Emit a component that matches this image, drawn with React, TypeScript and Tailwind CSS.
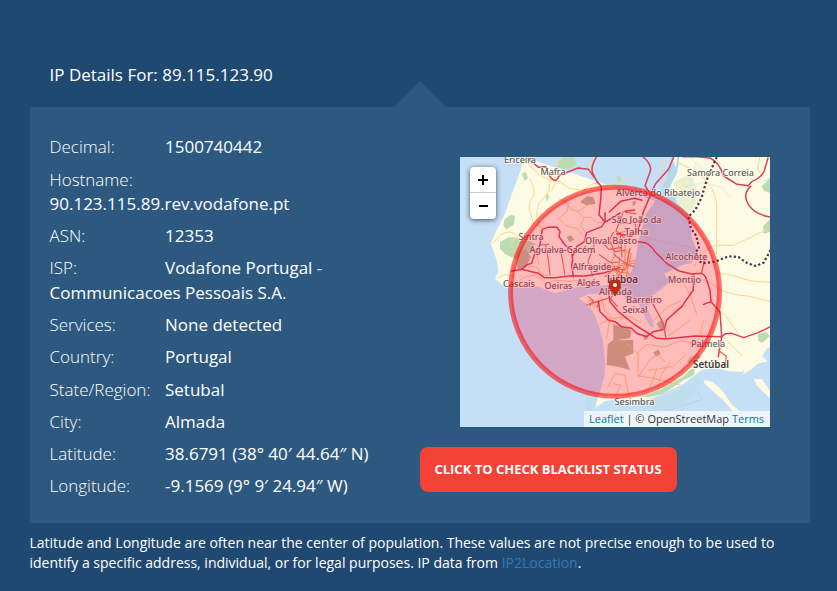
import React from "react";

const details: [string, string][] = [
  ["Decimal:", "1500740442"],
  ["Hostname:", "90.123.115.89.rev.vodafone.pt"],
  ["ASN:", "12353"],
  ["ISP:", "Vodafone Portugal - Communicacoes Pessoais S.A."],
  ["Services:", "None detected"],
  ["Country:", "Portugal"],
  ["State/Region:", "Setubal"],
  ["City:", "Almada"],
  ["Latitude:", "38.6791 (38° 40′ 44.64″ N)"],
  ["Longitude:", "-9.1569 (9° 9′ 24.94″ W)"],
];

// name, centre x, baseline y, size, bold, text length
const places: [string, number, number, number, boolean, number][] = [
  ["Ericeira", 60, 5.5, 9, false, 32],
  ["Mafra", 93, 18, 9, false, 25],
  ["Sintra", 71, 83, 9, false, 25],
  ["Agualva-Cacém", 102.5, 96, 9, false, 66],
  ["Olival Basto", 151, 86.5, 9, false, 52],
  ["Alfragide", 132, 112.5, 9, false, 39],
  ["Cascais", 59, 130, 9, false, 32],
  ["Oeiras", 98.5, 132, 9, false, 28],
  ["Algés", 128.5, 128.5, 9, false, 23],
  ["São João da", 176.5, 66, 9, false, 50],
  ["Talha", 176.5, 78, 9, false, 24],
  ["Alverca do Ribatejo", 198, 39, 9, false, 84],
  ["Samora Correia", 260.5, 19, 9, false, 67],
  ["Alcochete", 226.5, 102.5, 9, false, 42],
  ["Montijo", 224.5, 126, 9, false, 33],
  ["Lisboa", 162.5, 125.5, 10.5, true, 31],
  ["Almada", 155.5, 138, 9, false, 33],
  ["Barreiro", 184, 145.5, 9, false, 36],
  ["Seixal", 175, 156, 9, false, 25],
  ["Palmela", 248, 189.5, 9, false, 34],
  ["Setúbal", 251, 211, 10, true, 36],
  ["Sesimbra", 174.5, 248, 9, false, 40],
];

function MapDrawing() {
  return (
    <svg viewBox="0 0 310 270" className="block h-[270px] w-[310px]" fill="none">
      <rect width="310" height="270" fill="#c5dff6" />
      <g transform="scale(.33333)" strokeLinecap="round" strokeLinejoin="round">
        {/* Mainland */}
        <path
          fill="#fdfbe4"
          d="M192 0 180 45 152 120 135 170 112 215 92 259 104 292 112 318 115 345 105 364 120 379 145 391 185 394 220 389 235 389 260 399 285 409 320 399 350 391 385 384 430 386 465 379 495 360 515 342 525 315 530 285 534 258 540 250 552 200 568 165 605 112 635 70 640 0H930V570L920 575 905 600 885 620 860 628 848 645 858 672 866 680 855 690 835 686 818 660 800 640 760 634 725 640 705 654 670 680 630 700 600 714 560 728 500 732 465 728 435 732 410 750 400 762 408 735 422 700 434 655 435 610 428 545 415 500 400 465 380 440 355 424 388 410 420 412 450 404 475 408 515 430 535 440 548 468 570 508 583 512 574 480 562 455 573 430 580 415 615 388 630 372 612 350 640 338 660 326 695 318 704 285 698 252 686 225 690 195 670 160 640 150"
        />
        {/* Estuary and river channels */}
        <path fill="#b8d7ee" d="M635 0 650 38 630 75 617 116 650 113 682 158 690 205 695 245 708 272 704 309 665 325 635 337 612 350 630 372 600 392 580 400 572 425 560 440 540 435 500 416 474 400 515 345 530 300 537 245 560 169 600 110 620 60Z" />
        <path fill="#c5dff6" d="m845 645 25-20 30-8 30-43V810H840l-18-51-20-36-20-25-18-38 30-18Z" />
        <path fill="#fdfbe4" d="m733 669 25 6 28 25 30 43 27 22h-22l-29-33-37-33-22-20ZM881 665l25 2 24 34v22l-20-18-20-20ZM870 614l40-15 12 14-30 8-21 19-21 12 4-25Z" />
        {/* Woods, parks and heath */}
        <g fill="#bbdcb1">
          <path d="m295 15 20-20h25l10 29-22 13-37-5ZM120 255l25-14 45 2 36 17-18 31-42 15-31-15-15-16ZM134 187l18-14 13 4-4 26-21 14-10-11ZM185 51l12-7 7 20-9 8ZM258 118l5-10 4 12-7 15Z" />
          <path d="m560 712 42-14 38-22 30-17 22-22 12-3-2 20-32 16-38 26-25 15-42 10-32-3ZM910 207l20-20v38l-20 5ZM905 88l25-25v44l-18-6ZM893 532l24-8 13 13-23 20-12-6ZM470 60l12-3 2 14-9 8ZM690 600l22-10 13 10-25 18-20-2Z" />
        </g>
        <g fill="#bebb95">
          <path d="m360 135 20-17 20 2 7 20-28 5ZM320 240l13-5 10 13-15 7ZM460 501l55 18-5 25-45 6 55-1v40l-25 10 15 40-35-10-35-5 3-62 17-14Z" />
          <path d="m172 287 25-10 16 22-14 30-19 14-10-14ZM517 135l10-6v12l-8 7ZM590 500l14-11 10 22-12 10ZM549 535l11-3 3 13-9 5ZM581 585l15-7 6 13-15 9Z" />
        </g>
        <path fill="#edf0cf" d="m640 76 50-25 20 40-4 60-27 15-28-27Z" />
        <g stroke="#addaf3" strokeWidth="2">
          <path d="m655 0-6 45-20 38-12 34" strokeWidth="6" />
          <path d="M710 20q20 18 42 22t40 9 44-5 34 15 60 5M688 0l20 20-8 42-21 32M780 20l24 33 24 14 32 29M675 88l60-12 53 17 23 27" opacity=".55" />
        </g>
        {/* Secondary roads */}
        <g stroke="#fcd58d" strokeWidth="3">
          <path d="M190 0q20 35 62 62 25 13 48 12l28 20q28 6 48 5 14-20 34-20l30 12q25-17 45-15l22 20M275 54q-8 28-8 48l-30 38q-10 22-6 46l16 40M210 66q16 33 12 50-14 14-15 36l12 44q14 11 28 15" />
          <path d="m98 259 25-26q14-10 28-8 18 4 22 18l-14 6-4 18 18 21M115 364l18-12 30 6M480 77q8-12 22-12l20 8M300 0l-15 25q12 20 8 38l-18 38M402 0l-15 29 13 24M420 85l60 8M620 0q-16 15-15 35l2 54" />
          <path d="M650 15q40 17 65 35 50 38 55 92v148M930 220q-30 3-55 20l-56 25h-56l-38 24-21 36M770 350q30-2 56 8l46 14 58 4M692 360q30 5 56 16l42 27q40 14 80 15l60 16" />
          <path d="m760 458 34 14 42 60M900 0l-8 35 14 22M790 540l55 55M730 490l-8 38 17 41M630 615l-28 42-9 42M590 638l-25 62M675 595l-36 34-74 11" />
        </g>
        {/* Local street net */}
        <g stroke="#f9c47b" strokeWidth="2.5">
          <path d="m298 126 20 10 12 20 24 8 18 18 20-2 16 15 20 3M328 136l-8 28-22 20 18 22 38 10 12 20M372 182l-10 24 15 20M205 330q25-6 30 8t28 18M178 372q20-20 50-15l20 10M242 264l-12 24 7 35M254 380l32-10 45 3 45-5M355 164l32-24M325 272l24 10" />
          <path d="m385 429 35 10M389 430l13 20M424 420l10 40 24 22M400 438l25 32 30 15 50-7 38 18M420 500q32-20 50 0l20-20M450 482l-10 64M550 548l18-24M535 660l35-52 20-15M460 680l22 5-14 30M500 560l34 30 0 66 46 8M530 590l30-28 55 8 50-20 64 20M592 590l23 25M580 664l80 20M444 690l20-40 30 4 12 60" />
          <path d="m575 495 52-48 34-14M690 490l-64 46M660 360l30 54 20 58M715 340l-30 30M640 460l40-15" />
        </g>
        <g stroke="#f5a857" strokeWidth="3">
          <path d="m445 262 20-10 12-24 30-8M456 275l10 20-12 20 17 30M470 258l12 22 29 10M505 280l-5 84M514 290l-15 65M440 315l38 43M445 332l80-14M480 302l-10 60M495 260v60l-16 40M485 320l40-10M472 345l36 4" />
        </g>
        <g stroke="#df785f" strokeWidth="3.5">
          <path d="m300 274 7 35 8 45M257 264l8 45 5 45M242 264l24-2M404 260l-20 54 14 42M418 293l34 24 26-2M425 255l22 22 34-5M460 226l-12 24 17 34 34-5M480 190l-12 32 25 20M489 164l-10 36 46-4 4 28M497 166l31 4M435 359l28-24 32 4M481 227l5 72M462 293l40 30 20 6M510 274l-10 54-26 30M430 325l48 18" />
          <path d="m385 419 15 13-10 14M380 444l30-10 35-10M418 434l-7 16M464 401l-12 25 20 22" />
        </g>
        {/* Motorways */}
        <g stroke="#dc4057" strokeWidth="4.5">
          <path d="m200 2 36 29 22-2q8 30 20 38t18-8q8-12 20-11l38-15 31 4 25 34 14 18-2 39-5 45 18 23 45-28M409 0q-18 30-11 47t15 31M435 167v27l-10 15-45 18-7 27-23 15-10 25" />
          <path d="m155 342 30-5 30 7 20 5 18 13h32l50-6 40 1 60-10 45-16M185 337l15-13 15-5 8-25 17-30 7-47 16-6 27-1 10 14-3 15 18 25 20 15 3 30-3 15 5 35" />
          <path d="m448 165 34-32 42-9 22 6M550 0q28 25 20 45l-15 41 17 27 14-32 40-45 15-36M572 113l-22 52-15 53-20 20-45-8M495 163l29-4M535 254l20 3q18 8 30 27l35 35 35 22 40 10 30-2q12 6 15 20l10 30 3 35 27 30 5 75" />
          <path d="M700 351v48l-35 50-45 40-7 28-33 7-20 15M445 404l5 30 25 30 50 40 65 40 25 2 90-9 80 2 12-9 18-1 36 13 43-15 36-17M415 434l5 30 25 25 20 5 20 15 30 5 15 15 30 10M453 364l-8 40M753 434l-22 8" />
          <path d="M670-1h40l41 4q28 15 40 54l40 25 34 4 10-12q34-14 39-36l10-35M872 88q-26 24-7 54t65 38M785 539l-10 60" />
          <path stroke="#df6a5a" strokeWidth="4" d="m578 439 32 60 8 45M735 300l-10 49M775 580l24 18-5 32" />
        </g>
        {/* District boundary */}
        <path stroke="#43314d" strokeWidth="6.5" strokeLinecap="butt" strokeDasharray="6.5 7" d="m770 0-30 69-15 52-19 38-21 20 8 35 16 23 9 39-11 7 8 27 12 9 39-5 39-16 30 2 26 18 26 9 24-10 18-32 10-37V235" />
        <path stroke="#a6b1ce" strokeWidth="1.5" opacity=".7" d="m540 236 80 20 74 16M714 705l11 22-80 28-70 17H385" />
        <path fill="#bddde8" opacity=".55" d="m378 720 35 0-6 49-29 8ZM560 735l70-24 84-48 12 9-58 78-74 20Z" />
      </g>
      {places.map(([name, x, y, size, bold, length]) => (
        <text
          key={name}
          x={x}
          y={y}
          textAnchor="middle"
          fontSize={size}
          textLength={length}
          lengthAdjust="spacingAndGlyphs"
          fontFamily="'Noto Sans', 'Open Sans', sans-serif"
          fontWeight={bold ? 600 : 500}
          fill={bold ? "#403e40" : "#62605f"}
          stroke="#fffdf0"
          strokeOpacity=".65"
          strokeWidth="2"
          paintOrder="stroke"
        >
          {name}
        </text>
      ))}
      {/* Accuracy radius */}
      <circle cx="155" cy="134.8" r="104.5" fill="#ff0038" fillOpacity=".25" stroke="#ff0000" strokeOpacity=".55" strokeWidth="5" />
      {/* Location marker */}
      <path fill="#c72b0b" stroke="#8d2613" strokeWidth=".7" d="M151.2 123.5h7.6l1.5 1.6v6.2l-2.5 2.8-2.8 5-2.8-5-2.5-2.8v-6.2Z" />
      <circle cx="155" cy="128" r="2" fill="#fff" />
    </svg>
  );
}

export default function App() {
  return (
    <main className="h-[591px] w-[837px] overflow-hidden bg-[#204972] pl-[30px] pt-[63px] font-['Open_Sans',sans-serif] text-white">
      <h1 className="h-[44px] pl-[19.5px] text-[17px] leading-6 font-normal">IP Details For: 89.115.123.90</h1>
      <section className="relative flex h-[416px] w-[780px] bg-[#2d5980] pl-5">
        <svg className="absolute -top-[26px] left-[364px] h-[26px] w-[52px]" viewBox="0 0 52 26">
          <path d="M0 26 26 0l26 26Z" fill="#2d5980" />
        </svg>
        <div className="-ml-[0.5px] w-[370.5px] pr-9 pt-[28.27px]">
          {details.map(([label, value]) => (
            <p key={label} className="mb-2 text-[17px] leading-[24.286px]">
              <span className="inline-block w-[115.5px] font-light">{label}</span>
              <span>{value}</span>
            </p>
          ))}
        </div>
        <div className="pt-[50px]">
          <div className="relative ml-10 h-[270px] w-[310px] overflow-hidden">
            <MapDrawing />
            <div className="absolute left-2.5 top-2.5 w-[26px] overflow-hidden rounded bg-white text-center text-black shadow-[0_1px_5px_rgba(0,0,0,0.65)]">
              <div className="flex h-[26px] items-center justify-center border-b border-[#ccc]">
                <svg viewBox="0 0 10 10" className="h-2.5 w-2.5"><path d="M0 5h10M5 0v10" stroke="black" strokeWidth="2" /></svg>
              </div>
              <div className="flex h-[26px] items-center justify-center">
                <svg viewBox="0 0 10 10" className="h-2.5 w-2.5"><path d="M1 5h9" stroke="black" strokeWidth="2" /></svg>
              </div>
            </div>
            <div className="absolute bottom-0 right-0 h-4 w-[186px] whitespace-nowrap bg-white/70 px-[5px] text-[11px] leading-4 text-[#333]">
              <span className="text-[#0078a8]">Leaflet</span> | © OpenStreetMap <span className="text-[#0078a8]">Terms</span>
            </div>
          </div>
          <button className="mt-5 block h-[45px] w-[257px] rounded-lg bg-[#f44336] pr-px text-[13px] font-bold">CLICK TO CHECK BLACKLIST STATUS</button>
        </div>
      </section>
      <p className="-ml-[0.5px] mt-[10px] w-[780px] text-[14px] leading-5">
        Latitude and Longitude are often near the center of population. These values are not precise enough to be used to identify a specific address, individual, or for legal purposes. IP data from <span className="text-[#337ab7]">IP2Location</span>.
      </p>
    </main>
  );
}
